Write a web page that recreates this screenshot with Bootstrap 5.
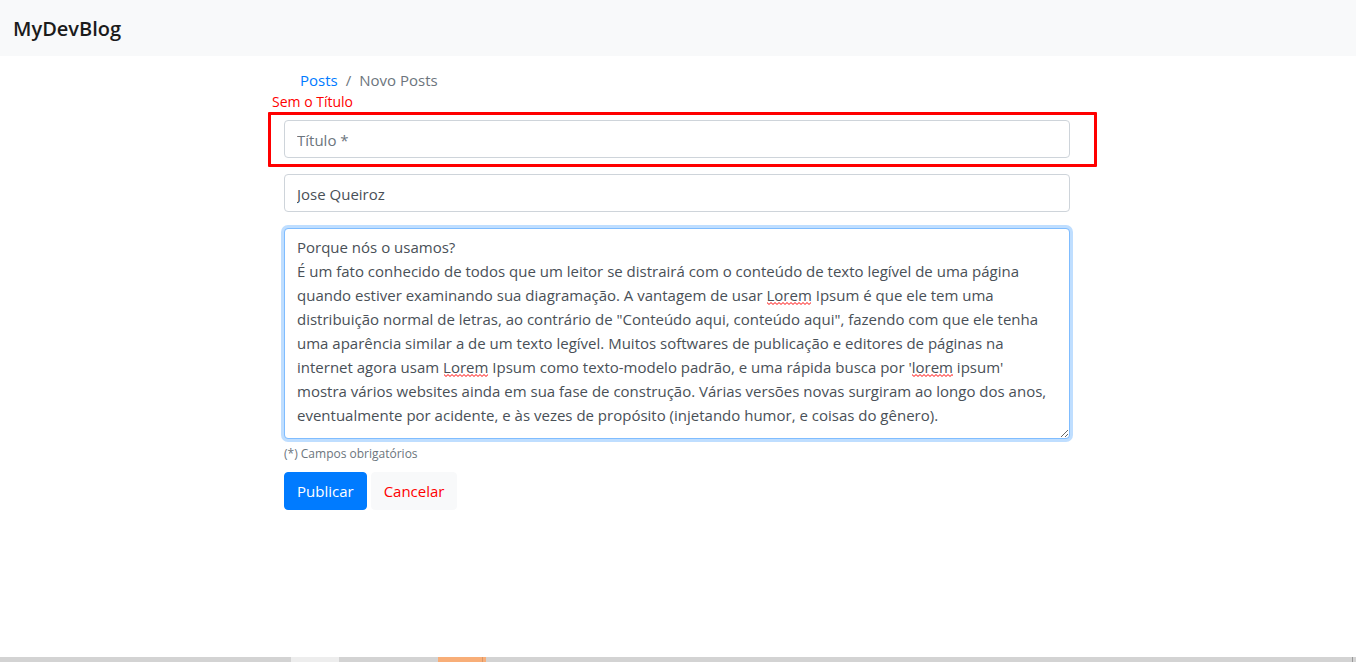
<!DOCTYPE html>
<html lang="pt-BR">
<head>
<meta charset="utf-8">
<meta name="viewport" content="width=device-width, initial-scale=1">
<title>MyDevBlog</title>
<link href="https://cdn.jsdelivr.net/npm/bootstrap@5.3.0/dist/css/bootstrap.min.css" rel="stylesheet">
<style>
  body { font-family: "Open Sans", "Noto Sans", sans-serif; font-size: 15px; line-height: 24px; }
  .site-bar { min-height: 56px; padding: 10px 13px 8px; background: #f8f9fa; }
  .site-bar .navbar-brand { font-size: 20px; line-height: 30px; font-weight: 600; color: #1b1b1b; }
  .post-area { max-width: 818px; padding: 0 17px 0 15px; }
  .breadcrumb { --bs-breadcrumb-item-padding-x: 8px; padding: 12px 16px; font-size: 15px; }
  .breadcrumb a { color: #007bff; text-decoration: none; }
  .breadcrumb .active, .breadcrumb-item + .breadcrumb-item::before { color: #6c757d; }
  .form-control { height: 38px; padding: 7px 12px 5px; border: 1px solid #ced4da; border-radius: 4px; font-size: 15px; line-height: 24px; color: #495057; }
  .form-control::placeholder { color: #6c757d; }
  .form-control.post-body { display: block; height: 211px; padding: 6px 12px; border-color: #80bdff; box-shadow: 0 0 0 3px #bfdeff; overflow: hidden; }
  .callout-frame { position: absolute; inset: -8px -27px -9px -16px; border: 3px solid #f00; border-radius: 1px; pointer-events: none; }
  .callout-text { position: absolute; left: -12px; top: -28px; font-size: 14px; line-height: 20px; color: #f00; white-space: nowrap; }
  .typo { position: absolute; width: 44px; height: 3px; pointer-events: none; }
  .hint { font-size: 12px; line-height: 20px; color: #6c757d; margin: 5px 0 8px; }
  .btn { padding: 6px 12px; border-radius: 4px; font-size: 15px; line-height: 24px; }
  .btn-publish, .btn-publish:hover { background: #007bff; border-color: #007bff; color: #fff; }
  .btn-cancel, .btn-cancel:hover { background: #f8f9fa; border-color: #f8f9fa; color: #f00; }
  .task-strip { height: 5px; background: #d3d3d3; }
  .task-lead { width: 291px; }
  .task-light { width: 48px; background: #ededed; }
  .task-gap { width: 99px; }
  .task-active { width: 48px; background: linear-gradient(to right, #f8ae78 44px, #d99768 44px 45px, #f8ae78 45px); }
  .task-end { width: 1px; background: #999; margin-right: 3px; }
</style>
</head>
<body class="d-flex flex-column min-vh-100">
<nav class="navbar site-bar">
  <a class="navbar-brand py-1 m-0" href="#">MyDevBlog</a>
</nav>
<main class="post-area w-100 mx-auto">
  <nav aria-label="breadcrumb">
    <ol class="breadcrumb mb-3">
      <li class="breadcrumb-item"><a href="#">Posts</a></li>
      <li class="breadcrumb-item active" aria-current="page">Novo Posts</li>
    </ol>
  </nav>
  <form>
    <div class="position-relative mb-3">
      <input class="form-control" type="text" placeholder="Título *" aria-label="Título">
      <span class="callout-frame"></span>
      <span class="callout-text">Sem o Título</span>
    </div>
    <div class="mb-3">
      <input class="form-control" type="text" value="Jose Queiroz" aria-label="Autor">
    </div>
    <div class="position-relative">
      <textarea class="form-control post-body" aria-label="Conteúdo" spellcheck="false">Porque nós o usamos?
É um fato conhecido de todos que um leitor se distrairá com o conteúdo de texto legível de uma página quando estiver examinando sua diagramação. A vantagem de usar Lorem Ipsum é que ele tem uma distribuição normal de letras, ao contrário de "Conteúdo aqui, conteúdo aqui", fazendo com que ele tenha uma aparência similar a de um texto legível. Muitos softwares de publicação e editores de páginas na internet agora usam Lorem Ipsum como texto-modelo padrão, e uma rápida busca por 'lorem ipsum' mostra vários websites ainda em sua fase de construção. Várias versões novas surgiram ao longo dos anos, eventualmente por acidente, e às vezes de propósito (injetando humor, e coisas do gênero).</textarea>
      <svg width="0" height="0" class="position-absolute" aria-hidden="true"><defs>
        <pattern id="wave" width="4" height="3" patternUnits="userSpaceOnUse"><path d="M-1 1.5 L0 .5 L2 2.5 L4 .5 L5 1.5" fill="none" stroke="#f00"/></pattern>
      </defs></svg>
      <svg class="typo" style="left:483px;top:74px" aria-hidden="true"><rect width="100%" height="3" fill="url(#wave)"/></svg>
      <svg class="typo" style="left:160px;top:146px" aria-hidden="true"><rect width="100%" height="3" fill="url(#wave)"/></svg>
      <svg class="typo" style="left:628px;top:146px" aria-hidden="true"><rect width="41" height="3" fill="url(#wave)"/></svg>
    </div>
    <p class="hint">(*) Campos obrigatórios</p>
    <div class="d-flex gap-1">
      <button class="btn btn-publish" type="submit">Publicar</button>
      <button class="btn btn-cancel" type="button">Cancelar</button>
    </div>
  </form>
</main>
<footer class="task-strip d-flex mt-auto" aria-hidden="true">
  <span class="task-lead"></span><span class="task-light"></span><span class="task-gap"></span><span class="task-active"></span><span class="task-end ms-auto"></span>
</footer>
<script src="https://cdn.jsdelivr.net/npm/bootstrap@5.3.0/dist/js/bootstrap.bundle.min.js"></script>
</body>
</html>
